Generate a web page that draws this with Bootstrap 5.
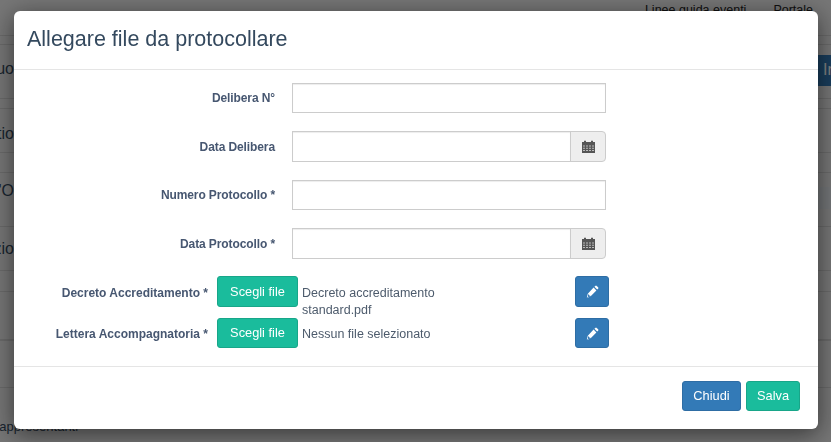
<!DOCTYPE html>
<html lang="it">
<head>
<meta charset="utf-8">
<title>Allegare file da protocollare</title>
<link href="https://cdn.jsdelivr.net/npm/bootstrap@5.3.0/dist/css/bootstrap.min.css" rel="stylesheet">
<style>
html,body{height:100%;overflow:hidden;background:#ececec;font-family:"Liberation Sans",Arial,sans-serif;color:#34495e}
.pg-top{height:36px;border-bottom:1px solid #d4d4d4;font-size:12.5px;line-height:16px;color:#222;padding:2px 18px 0 0;justify-content:flex-end;gap:27px}
.pg-row{border-bottom:1px solid #d4d4d4;overflow:hidden}
.pg-clip{width:14px;overflow:hidden;white-space:nowrap;font-size:16px;line-height:24px;color:#34495e;flex:none;display:flex;justify-content:flex-end}
.pg-go{width:13px;height:31px;background:#337ab7;color:#fff;font-size:16px;margin-left:auto;padding:3px 0 0 5px;overflow:hidden;margin-top:10px;flex:none}
.pg-band{width:13px;height:22px;background:#e6ebef;margin-left:auto;margin-top:14px;flex:none}
.pg-end{font-size:13px;white-space:nowrap;padding-top:29px;color:#34495e;margin-left:-5px}
.modal-backdrop.show{opacity:.5}
.dlg{max-width:none;width:804px;margin:11px 0 0 14px}
.dlg .modal-content{height:418px;border:0;border-radius:6px;box-shadow:0 5px 25px rgba(0,0,0,.55);color:#34495e}
.dlg .modal-header{height:59px;padding:0 13px;border-bottom:1px solid #e5e5e5;border-radius:0;align-items:center}
.dlg .modal-title{font-size:21.5px;line-height:1;font-weight:400;color:#34495e}
.dlg .modal-body{padding:13px 0 18px;flex:none;height:296px}
.dlg .modal-footer{height:63px;padding:14px 18px 0 0;border-top:1px solid #e5e5e5;gap:5px;align-items:flex-start;border-radius:0}
.dlg .modal-footer>*{margin:0}
.fld{margin-bottom:18px}
.fld-lab{width:261px;margin:0 17px 0 0;text-align:right;font-size:12px;letter-spacing:-.1px;font-weight:700;color:#475771;flex:none}
.fld-box{width:314px;flex:none}
.dlg .form-control{height:30px;border:1px solid #ccc;border-radius:0;box-shadow:inset 0 1px 1px rgba(0,0,0,.075);padding:4px 8px;font-size:13px}
.dlg .input-group .form-control{height:31px;border-top-left-radius:0;border-bottom-left-radius:0}
.dlg .input-group-text{width:36px;height:31px;padding:0;justify-content:center;background:#eee;border:1px solid #ccc;border-radius:0 4px 4px 0}
.up-row{height:42px}
.up-row2{height:30px}
.up-lab{width:194px;margin:0 9px 0 0;text-align:right;font-size:12px;font-weight:700;color:#475771;flex:none;padding-top:10px;line-height:14px}
.up-row2 .up-lab{padding-top:9px}
.btn-tl,.btn-bl{font-size:12.8px;line-height:18px;padding:5px 0;border-radius:3px;color:#fff;flex:none}
.btn-tl{background:#1abc9c;border:1px solid #18a689}
.btn-bl{background:#337ab7;border:1px solid #2e6da4}
.btn-tl:hover{background:#1abc9c;color:#fff}
.btn-bl:hover{background:#337ab7;color:#fff}
.up-btn{width:81px;height:31px;padding-top:5px}
.up-row2 .up-btn{height:30px;padding-top:4px}
.up-txt{width:273px;margin-left:4px;flex:none;font-size:12.5px;line-height:17px;padding-top:9px;color:#4d5b6c}
.up-row2 .up-txt{padding-top:8px}
.up-txt span{display:block;max-width:160px}
.up-ed{width:34px;height:31px;padding:0;display:flex;align-items:center;justify-content:center;flex:none}
.up-row2 .up-ed{height:30px}
.ft-a{width:59px;height:30px}
.ft-b{width:54px;height:30px}
</style>
</head>
<body>
<div class="pg-top d-flex"><span>Linee guida eventi</span><span>Portale</span></div>
<div class="pg-row" style="height:9px"></div>
<div class="pg-row d-flex" style="height:54px"><div class="pg-clip" style="padding-top:12px">uo</div><div class="pg-go">In</div></div>
<div class="pg-row" style="height:10px"></div>
<div class="pg-row d-flex" style="height:44px"><div class="pg-clip" style="padding-top:13px">tio</div></div>
<div class="pg-row" style="height:20px"></div>
<div class="pg-row d-flex" style="height:54px"><div class="pg-clip" style="padding-top:6px">l'O</div><div class="pg-band"></div></div>
<div class="pg-row d-flex" style="height:44px"><div class="pg-clip" style="padding-top:10px">zio</div></div>
<div class="pg-row" style="height:21px"></div>
<div class="pg-row" style="height:49px;border-bottom-width:2px"></div>
<div class="pg-row" style="height:47px"></div>
<div class="pg-end">rappresentanti</div>

<div class="modal-backdrop show"></div>
<div class="modal d-block" tabindex="-1">
  <div class="modal-dialog dlg">
    <div class="modal-content">
      <div class="modal-header"><h5 class="modal-title">Allegare file da protocollare</h5></div>
      <div class="modal-body">
        <form>
          <div class="fld d-flex align-items-center">
            <label class="fld-lab">Delibera N°</label>
            <div class="fld-box"><input class="form-control" type="text"></div>
          </div>
          <div class="fld d-flex align-items-center">
            <label class="fld-lab">Data Delibera</label>
            <div class="fld-box input-group">
              <input class="form-control" type="text">
              <span class="input-group-text"><svg width="13" height="13" viewBox="0 0 13 13"><use href="#cal"/></svg></span>
            </div>
          </div>
          <div class="fld d-flex align-items-center">
            <label class="fld-lab">Numero Protocollo *</label>
            <div class="fld-box"><input class="form-control" type="text"></div>
          </div>
          <div class="fld d-flex align-items-center" style="margin-bottom:17px">
            <label class="fld-lab">Data Protocollo *</label>
            <div class="fld-box input-group">
              <input class="form-control" type="text">
              <span class="input-group-text"><svg width="13" height="13" viewBox="0 0 13 13"><use href="#cal"/></svg></span>
            </div>
          </div>
          <div class="up-row d-flex align-items-start">
            <label class="up-lab">Decreto Accreditamento *</label>
            <button type="button" class="btn btn-tl up-btn">Scegli file</button>
            <div class="up-txt"><span>Decreto accreditamento standard.pdf</span></div>
            <button type="button" class="btn btn-bl up-ed" aria-label="Modifica"><svg width="13" height="13" viewBox="0 0 13 13"><use href="#pen"/></svg></button>
          </div>
          <div class="up-row2 d-flex align-items-start">
            <label class="up-lab">Lettera Accompagnatoria *</label>
            <button type="button" class="btn btn-tl up-btn">Scegli file</button>
            <div class="up-txt"><span>Nessun file selezionato</span></div>
            <button type="button" class="btn btn-bl up-ed" aria-label="Modifica"><svg width="13" height="13" viewBox="0 0 13 13"><use href="#pen"/></svg></button>
          </div>
        </form>
      </div>
      <div class="modal-footer">
        <button type="button" class="btn btn-bl ft-a">Chiudi</button>
        <button type="button" class="btn btn-tl ft-b">Salva</button>
      </div>
    </div>
  </div>
</div>

<svg width="0" height="0" class="d-none">
  <defs>
    <g id="cal">
      <path fill="#555" d="M0 2h2V.8h2V2h5V.8h2V2h2v11H0z"/>
      <path fill="#fff" opacity=".6" d="M1 5.5h2v1H1zm3 0h2v1H4zm3 0h2v1H7zm3 0h2v1h-2zM1 7.8h2v1H1zm3 0h2v1H4zm3 0h2v1H7zm3 0h2v1h-2zM1 10.1h2v1H1zm3 0h2v1H4zm3 0h2v1H7zm3 0h2v1h-2z"/>
    </g>
    <g id="pen">
      <path fill="#fff" d="M9.3.9a1 1 0 0 1 1.4 0l1.4 1.4a1 1 0 0 1 0 1.4l-.9.9-2.8-2.8zM7.6 2.6l2.8 2.8-6 6-3.6 1 1-3.6zM2.4 9.3l-.7 2 .9.9 2-.6-.3-.9-1.1-.2-.2-1.1z"/>
    </g>
  </defs>
</svg>
<script src="https://cdn.jsdelivr.net/npm/bootstrap@5.3.0/dist/js/bootstrap.bundle.min.js"></script>
</body>
</html>
